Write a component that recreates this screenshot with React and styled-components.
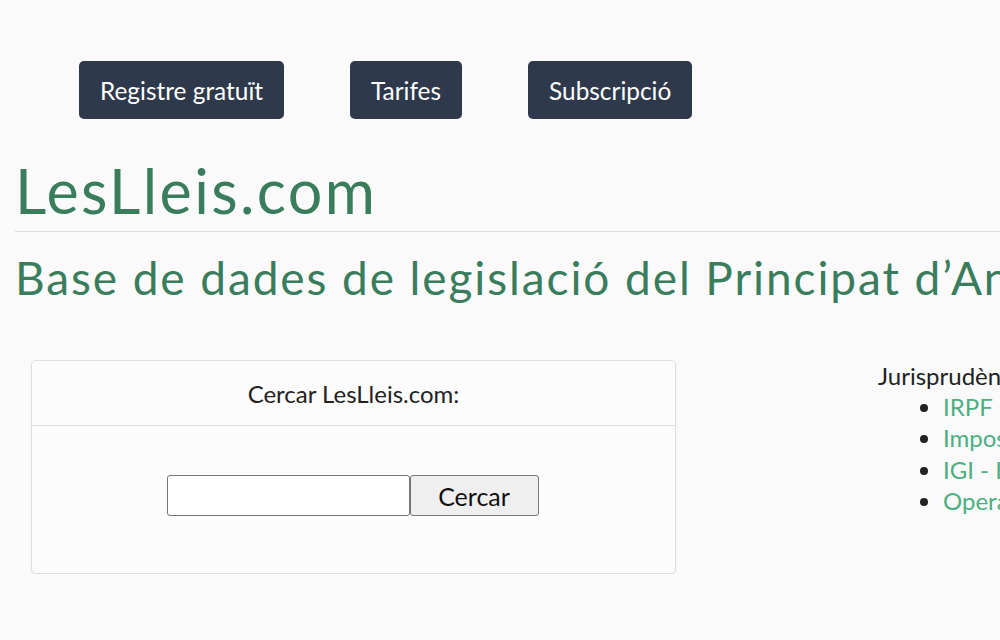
import React from "react";
import styled, { createGlobalStyle } from "styled-components";

const Global = createGlobalStyle`
  html, body { margin: 0; padding: 0; overflow: hidden; }
  body {
    background: #fafafa;
    font-family: Lato, "Open Sans", sans-serif;
    color: #222;
  }
`;

const Page = styled.div`
  width: 1240px;
  padding: 0 0 0 15px;
  box-sizing: border-box;
`;

const Nav = styled.nav`
  display: flex;
  gap: 66px;
  padding: 61px 0 0 64px;
`;

const NavButton = styled.a`
  display: flex;
  align-items: center;
  justify-content: center;
  height: 58px;
  padding: 0 21px;
  background: #2e3a4b;
  color: #fff;
  border-radius: 5px;
  font-size: 24.4px;
  text-decoration: none;
  box-sizing: border-box;
`;

const Title = styled.h1`
  margin: 34px 0 0;
  padding-bottom: 2px;
  font-family: Lato, sans-serif;
  font-weight: 400;
  font-size: 61px;
  line-height: 76px;
  letter-spacing: 2.4px;
  color: #3a7d5d;
  border-bottom: 1px solid #dcdcdc;
`;

const Subtitle = styled.h2`
  margin: 18px 0 0;
  font-family: Lato, sans-serif;
  font-weight: 400;
  font-size: 46px;
  line-height: 56px;
  letter-spacing: 1.9px;
  color: #3a7d5d;
  white-space: nowrap;
`;

const Content = styled.div`
  display: flex;
  align-items: flex-start;
  margin-top: 54px;
`;

const Card = styled.div`
  margin-left: 16px;
  width: 645px;
  height: 214px;
  background: #fcfcfc;
  border: 1px solid #dedede;
  border-radius: 5px;
  box-shadow: 0 1px 2px rgba(0, 0, 0, 0.06);
  box-sizing: border-box;
  flex-shrink: 0;
`;

const CardHeader = styled.div`
  height: 64px;
  display: flex;
  align-items: center;
  justify-content: center;
  border-bottom: 1px solid #dedede;
  font-size: 24px;
  color: #222;
`;

const CardBody = styled.form`
  display: flex;
  justify-content: center;
  padding-top: 49px;
  padding-right: 2px;
`;

const SearchInput = styled.input`
  width: 243px;
  height: 41px;
  margin: 0;
  box-sizing: border-box;
  border: 1px solid #777;
  border-radius: 3px;
  background: #fff;
  font-size: 20px;
  font-family: Lato, sans-serif;
`;

const SearchButton = styled.button`
  margin: 0;
  width: 129px;
  height: 41px;
  box-sizing: border-box;
  border: 1px solid #777;
  border-radius: 3px;
  background: #efefef;
  font-family: Lato, sans-serif;
  font-size: 25px;
  color: #111;
`;

const Side = styled.div`
  margin-left: 202px;
  font-size: 24px;
  color: #222;
`;

const SideTitle = styled.div`
  line-height: 31px;
  white-space: nowrap;
`;

const LinkList = styled.ul`
  margin: 0;
  padding-left: 65px;
  list-style: disc;
`;

const LinkItem = styled.li`
  line-height: 31.3px;
  white-space: nowrap;
`;

const Link = styled.a`
  color: #4caf80;
  text-decoration: none;
`;

export default function App() {
  return (
    <>
      <Global />
      <Page>
        <Nav>
          <NavButton href="#">Registre gratuït</NavButton>
          <NavButton href="#">Tarifes</NavButton>
          <NavButton href="#">Subscripció</NavButton>
        </Nav>
        <Title>LesLleis.com</Title>
        <Subtitle>Base de dades de legislació del Principat d’Andorra</Subtitle>
        <Content>
          <Card>
            <CardHeader>Cercar LesLleis.com:</CardHeader>
            <CardBody onSubmit={(e) => e.preventDefault()}>
              <SearchInput type="text" />
              <SearchButton type="submit">Cercar</SearchButton>
            </CardBody>
          </Card>
          <Side>
            <SideTitle>Jurisprudència</SideTitle>
            <LinkList>
              <LinkItem><Link href="#">IRPF</Link></LinkItem>
              <LinkItem><Link href="#">Impost de societats</Link></LinkItem>
              <LinkItem><Link href="#">IGI - Impost general indirecte</Link></LinkItem>
              <LinkItem><Link href="#">Operacions vinculades</Link></LinkItem>
            </LinkList>
          </Side>
        </Content>
      </Page>
    </>
  );
}
